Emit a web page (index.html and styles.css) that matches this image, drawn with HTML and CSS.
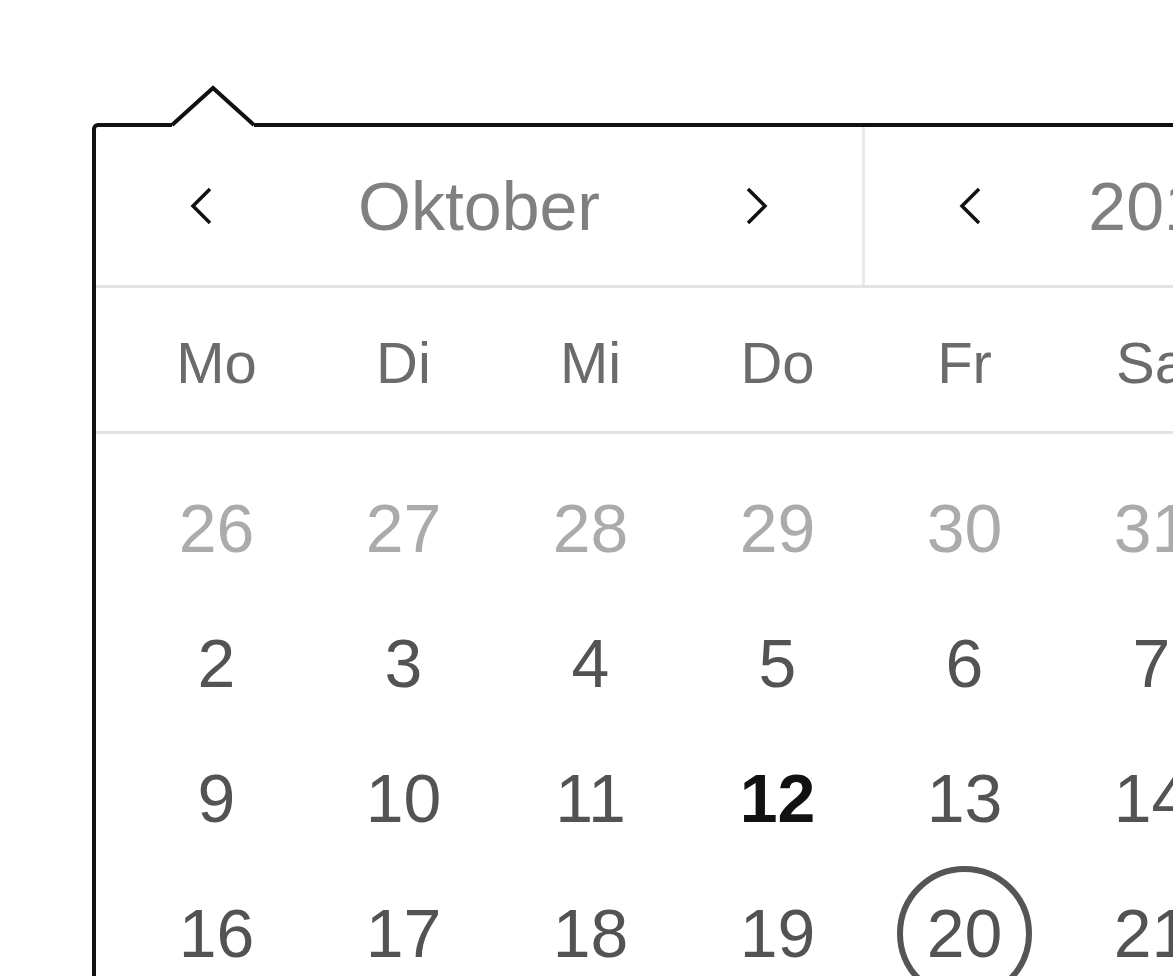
FILE: index.html
```html
<!DOCTYPE html>
<html lang="de">
<head>
<meta charset="utf-8">
<title>Kalender</title>
<link rel="stylesheet" href="styles.css">
</head>
<body>
<div class="popover">
  <svg class="caret" viewBox="0 0 90 44" width="90" height="44">
    <polygon points="4,40 45,3 86,40" fill="#fff"/>
    <rect x="4" y="37.5" width="82" height="6" fill="#fff"/>
    <polyline points="4,40 45,3 86,40" fill="none" stroke="#111" stroke-width="4" stroke-linejoin="miter"/>
  </svg>
  <div class="header">
    <div class="nav month">
      <button class="arrow" type="button" aria-label="Vorheriger Monat">
        <svg viewBox="0 0 24 40" width="24" height="40"><polyline points="21,3 4,20 21,37" fill="none" stroke="#111" stroke-width="3.5"/></svg>
      </button>
      <span class="label">Oktober</span>
      <button class="arrow" type="button" aria-label="Nächster Monat">
        <svg viewBox="0 0 24 40" width="24" height="40"><polyline points="3,3 20,20 3,37" fill="none" stroke="#111" stroke-width="3.5"/></svg>
      </button>
    </div>
    <div class="nav year">
      <button class="arrow" type="button" aria-label="Vorheriges Jahr">
        <svg viewBox="0 0 24 40" width="24" height="40"><polyline points="21,3 4,20 21,37" fill="none" stroke="#111" stroke-width="3.5"/></svg>
      </button>
      <span class="label">2017</span>
      <button class="arrow" type="button" aria-label="Nächstes Jahr">
        <svg viewBox="0 0 24 40" width="24" height="40"><polyline points="3,3 20,20 3,37" fill="none" stroke="#111" stroke-width="3.5"/></svg>
      </button>
    </div>
  </div>
  <div class="weekdays">
    <div>Mo</div><div>Di</div><div>Mi</div><div>Do</div><div>Fr</div><div>Sa</div><div>So</div>
  </div>
  <div class="days">
    <span class="other">26</span><span class="other">27</span><span class="other">28</span><span class="other">29</span><span class="other">30</span><span class="other">31</span><span>1</span>
    <span>2</span><span>3</span><span>4</span><span>5</span><span>6</span><span>7</span><span>8</span>
    <span>9</span><span>10</span><span>11</span><span class="today">12</span><span>13</span><span>14</span><span>15</span>
    <span>16</span><span>17</span><span>18</span><span>19</span><span class="selected"><b>20</b></span><span>21</span><span>22</span>
    <span>23</span><span>24</span><span>25</span><span>26</span><span>27</span><span>28</span><span>29</span>
    <span>30</span><span>31</span><span class="other">1</span><span class="other">2</span><span class="other">3</span><span class="other">4</span><span class="other">5</span>
  </div>
</div>
</body>
</html>
```

FILE: styles.css
```css
html, body {
  margin: 0;
  padding: 0;
  overflow: hidden;
  background: #fff;
}

body {
  font-family: "Liberation Sans", Arial, Helvetica, sans-serif;
}

.popover {
  position: relative;
  margin: 123px 0 0 92px;
  width: 1367px;
  background: #fff;
  border: 4px solid #111;
  border-top-left-radius: 6px;
}

.caret {
  position: absolute;
  left: 72px;
  top: -42px;
  display: block;
}

.header {
  display: flex;
  border-bottom: 3px solid #e3e3e3;
}

.nav {
  display: flex;
  height: 158px;
}

.month {
  width: 766px;
}

.year {
  width: 598px;
  border-left: 3px solid #e9e9e9;
}

.arrow {
  width: 210px;
  flex: none;
  display: flex;
  align-items: center;
  justify-content: center;
  padding: 0;
  margin: 0;
  border: 0;
  background: transparent;
}

.arrow svg {
  display: block;
}

.label {
  flex: 1;
  text-align: center;
  font-size: 68px;
  line-height: 158px;
  color: #808080;
  white-space: nowrap;
}

.weekdays {
  display: grid;
  grid-template-columns: repeat(7, 187px);
  padding: 7px 27px 0;
  height: 136px;
  line-height: 136px;
  font-size: 58px;
  color: #6b6b6b;
  text-align: center;
  border-bottom: 3px solid #e3e3e3;
}

.days {
  display: grid;
  grid-template-columns: repeat(7, 187px);
  grid-auto-rows: 135px;
  padding: 27px;
  font-size: 68px;
  line-height: 135px;
  color: #535353;
  text-align: center;
}

.days span {
  display: flex;
  justify-content: center;
}

.days .other {
  color: #ababab;
}

.days .today {
  font-weight: 700;
  color: #111;
}

.days .selected b {
  display: block;
  box-sizing: border-box;
  width: 135px;
  height: 135px;
  border: 6px solid #555;
  border-radius: 50%;
  line-height: 123px;
  font-weight: 400;
}
```
